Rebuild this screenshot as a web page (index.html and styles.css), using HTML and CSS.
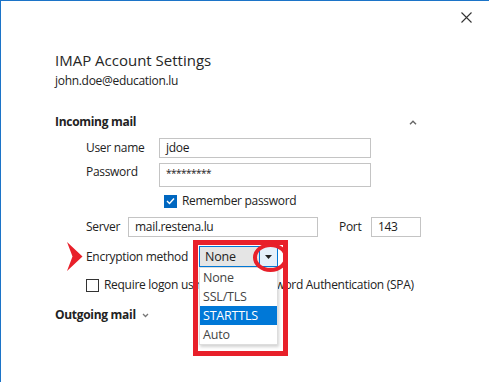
FILE: index.html
```html
<!DOCTYPE html>
<html>
<head>
<meta charset="utf-8">
<link rel="stylesheet" href="styles.css">
</head>
<body>
<div class="dialog">
  <div class="titlebar">
    <svg class="close" width="11" height="11" viewBox="0 0 11 11"><path d="M0.5 0.5 L10.5 10.5 M10.5 0.5 L0.5 10.5" stroke="#333" stroke-width="1.1" fill="none"/></svg>
  </div>
  <div class="content">
    <div class="title">IMAP Account Settings</div>
    <div class="email">john.doe@education.lu</div>
    <div class="section-head incoming">
      <span>Incoming mail</span>
      <svg class="chev" width="8" height="5" viewBox="0 0 8 5"><path d="M1 4.3 L4 1.3 L7 4.3" stroke="#666" stroke-width="1.4" fill="none"/></svg>
    </div>
    <div class="fields">
      <div class="row r-user">
        <span class="lbl">User name</span>
        <div class="input wide">jdoe</div>
      </div>
      <div class="row r-pass">
        <span class="lbl">Password</span>
        <div class="input wide tall"><span class="stars">*********</span></div>
      </div>
      <div class="row r-remember">
        <span class="checkbox checked"><svg width="9" height="8" viewBox="0 0 9 8"><path d="M1 4 L3.5 6.5 L8 1.5" stroke="#fff" stroke-width="1.4" fill="none"/></svg></span>
        <span>Remember password</span>
      </div>
      <div class="row r-server">
        <span class="lbl-server">Server</span>
        <div class="input server">mail.restena.lu</div>
        <span class="lbl-port">Port</span>
        <div class="input port">143</div>
      </div>
      <div class="row r-enc">
        <svg class="marker" width="16" height="29" viewBox="0 0 16 29"><path d="M0 0 L15.5 14.5 L0 29 L5.5 14.5 Z" fill="#e8202a"/></svg>
        <span class="lbl">Encryption method</span>
        <div class="combo">
          <span class="combo-value">None</span>
          <span class="combo-btn"><svg width="7" height="4" viewBox="0 0 7 4"><path d="M0 0 L7 0 L3.5 4 Z" fill="#222"/></svg></span>
          <ul class="list">
            <li>None</li>
            <li>SSL/TLS</li>
            <li class="sel">STARTTLS</li>
            <li>Auto</li>
          </ul>
          <div class="hl-rect"></div>
          <div class="hl-circle"></div>
        </div>
      </div>
      <div class="row r-spa">
        <span class="checkbox"></span>
        <span>Require logon using Secure Password Authentication (SPA)</span>
      </div>
    </div>
    <div class="section-head outgoing">
      <span>Outgoing mail</span>
      <svg class="chev-down" width="7" height="5" viewBox="0 0 7 5"><path d="M1 1 L3.5 3.5 L6 1" stroke="#777" stroke-width="1.3" fill="none"/></svg>
    </div>
  </div>
</div>
</body>
</html>
```
FILE: styles.css
```css
* { box-sizing: border-box; }
html, body { margin: 0; padding: 0; background: #fff; }
body {
  font-family: "Open Sans", "Noto Sans", sans-serif;
  font-size: 12px;
  line-height: 16px;
  letter-spacing: -0.3px;
  color: #222;
}
.dialog {
  width: 489px;
  height: 382px;
  border-top: 1px solid #1c74c8;
  border-left: 1px solid #1c74c8;
  overflow: hidden;
  position: relative;
}
.titlebar {
  display: flex;
  justify-content: flex-end;
  padding: 11px 17px 0 0;
  height: 40px;
}
.close { display: block; }
.content {
  padding-left: 54px;
}
.title {
  font-size: 15px;
  line-height: 20px;
  letter-spacing: 0;
  color: #262626;
  margin-top: 9px;
}
.email {
  margin-top: 2px;
  line-height: 18px;
}
.section-head {
  display: flex;
  align-items: center;
  font-weight: bold;
  line-height: 18px;
}
.incoming {
  margin-top: 23px;
  width: 362px;
  justify-content: space-between;
}
.fields {
  padding-left: 31px;
  display: flex;
  flex-direction: column;
}
.row {
  display: flex;
  align-items: center;
  position: relative;
}
.lbl { width: 73px; }
.input {
  border: 1px solid #c4c4c4;
  height: 20px;
  display: flex;
  align-items: center;
  padding-left: 6px;
  color: #1a1a1a;
}
.wide { width: 212px; }
.tall { height: 24px; align-items: flex-start; padding-top: 1px; }
.stars { font-size: 10px; letter-spacing: -0.5px; }
.r-user { margin-top: 7px; }
.r-pass { margin-top: 5px; align-items: flex-start; }
.r-pass .lbl { padding-top: 1px; }
.r-remember { margin-top: 6px; padding-left: 78px; gap: 5px; }
.checkbox {
  width: 13px;
  height: 13px;
  border: 1px solid #333;
  display: inline-flex;
  align-items: center;
  justify-content: center;
  background: #fff;
  flex: none;
}
.checkbox.checked {
  background: #0067c0;
  border-color: #0067c0;
}
.r-server { margin-top: 8px; }
.lbl-server { width: 42px; }
.server { width: 190px; }
.lbl-port { margin-left: 21px; width: 32px; }
.port { width: 50px; }
.r-enc { margin-top: 9px; }
.r-enc .lbl { width: 113px; }
.marker { position: absolute; left: -19px; top: -4px; }
.combo {
  position: relative;
  width: 79px;
  height: 21px;
  border: 1px solid #0078d7;
  background: #e5e5e5;
  display: flex;
  align-items: stretch;
}
.combo-value { flex: 1; padding-left: 5px; font-size: 12.5px; line-height: 19px; letter-spacing: -0.2px; }
.combo-btn {
  width: 18px;
  border-left: 1px solid #0078d7;
  background: #e5f1fb;
  display: flex;
  align-items: center;
  justify-content: center;
}
.list {
  position: absolute;
  left: -1px;
  top: 20px;
  width: 79px;
  margin: 0;
  padding: 0;
  list-style: none;
  background: #fff;
  border: 1px solid #ddd;
  box-shadow: 1px 2px 3px rgba(0,0,0,0.18);
  font-size: 12.5px;
  letter-spacing: -0.2px;
  z-index: 2;
}
.list li {
  height: 19px;
  line-height: 19px;
  padding-left: 3px;
  color: #444;
}
.list li.sel { background: #0078d7; color: #fff; }
.hl-rect {
  position: absolute;
  left: -7px;
  top: -7px;
  width: 95px;
  height: 116px;
  border: 5px solid #e8202a;
  z-index: 3;
}
.hl-circle {
  position: absolute;
  left: 53px;
  top: -4px;
  width: 35px;
  height: 29px;
  border: 4px solid #e8202a;
  border-radius: 50%;
  z-index: 4;
}
.r-spa { margin-top: 10px; gap: 5px; }
.outgoing { margin-top: 13px; gap: 6px; }
```
